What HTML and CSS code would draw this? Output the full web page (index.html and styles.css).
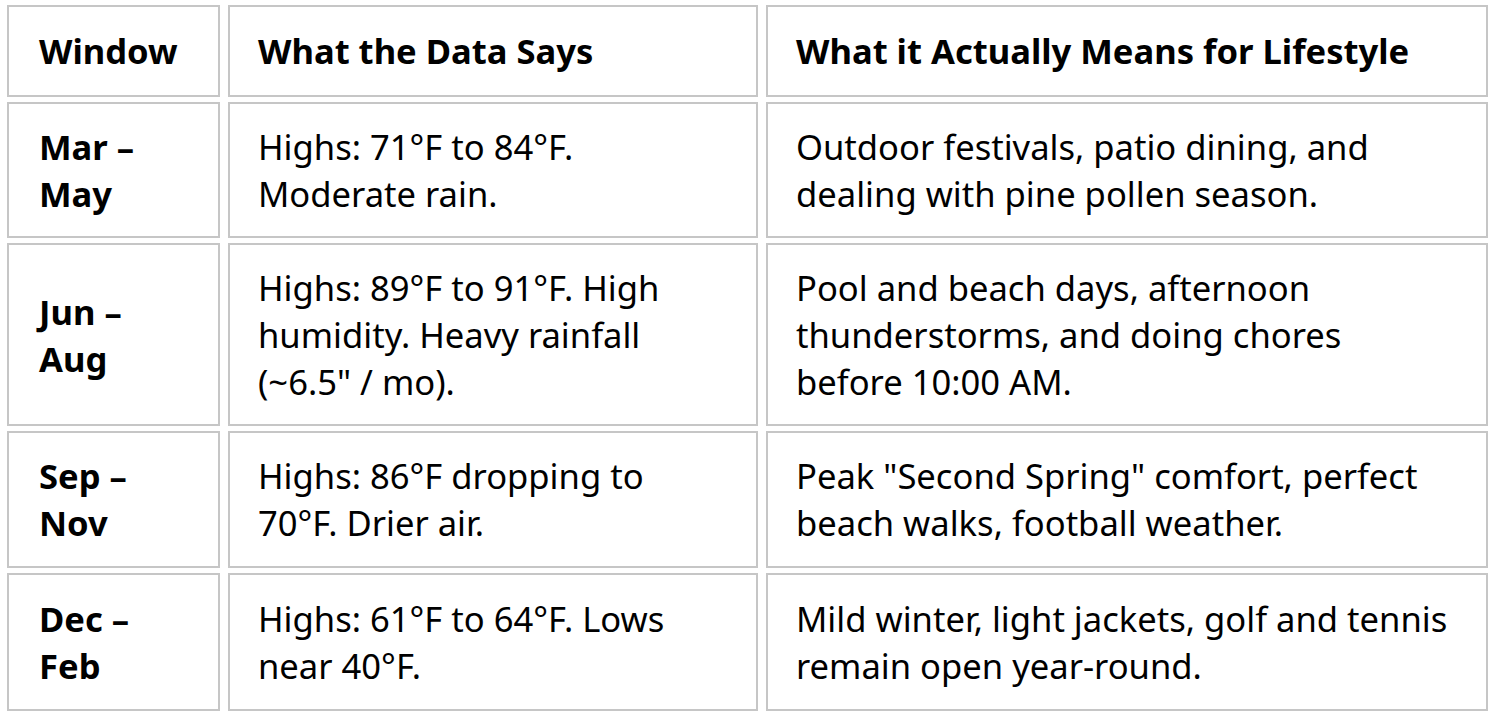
FILE: index.html
```html
<!DOCTYPE html>
<html lang="en">
<head>
<meta charset="utf-8">
<title>Seasonal Windows</title>
<link rel="stylesheet" href="styles.css">
</head>
<body>
<table class="climate">
  <colgroup>
    <col class="c-window">
    <col class="c-data">
    <col class="c-life">
  </colgroup>
  <thead>
    <tr>
      <th class="first">Window</th>
      <th>What the Data Says</th>
      <th>What it Actually Means for Lifestyle</th>
    </tr>
  </thead>
  <tbody>
    <tr>
      <th class="first">Mar –<br>May</th>
      <td>Highs: 71°F to 84°F.<br>Moderate rain.</td>
      <td>Outdoor festivals, patio dining, and<br>dealing with pine pollen season.</td>
    </tr>
    <tr>
      <th class="first">Jun –<br>Aug</th>
      <td>Highs: 89°F to 91°F. High<br>humidity. Heavy rainfall<br>(~6.5" / mo).</td>
      <td>Pool and beach days, afternoon<br>thunderstorms, and doing chores<br>before 10:00 AM.</td>
    </tr>
    <tr>
      <th class="first">Sep –<br>Nov</th>
      <td>Highs: 86°F dropping to<br>70°F. Drier air.</td>
      <td>Peak "Second Spring" comfort, perfect<br>beach walks, football weather.</td>
    </tr>
    <tr>
      <th class="first">Dec –<br>Feb</th>
      <td>Highs: 61°F to 64°F. Lows<br>near 40°F.</td>
      <td>Mild winter, light jackets, golf and tennis<br>remain open year-round.</td>
    </tr>
  </tbody>
</table>
</body>
</html>
```
FILE: styles.css
```css
html, body {
  margin: 0;
  padding: 0;
  background: #ffffff;
}

.climate {
  margin-left: -1px;
  width: 1497px;
  table-layout: fixed;
  border-collapse: separate;
  border-spacing: 8px 5px;
  font-family: "Noto Sans", "Open Sans", sans-serif;
  font-size: 34.6px;
  line-height: 47px;
  color: #000000;
}

.c-window { width: 213px; }
.c-data { width: 530px; }
.c-life { width: 722px; }

.climate th,
.climate td {
  box-sizing: border-box;
  border: 2px solid #c6c6c6;
  padding: 19px 28px 19px 28px;
  text-align: left;
  vertical-align: middle;
}

.climate th {
  font-weight: 700;
}

.climate td {
  font-weight: 400;
}

.climate thead th {
  padding-top: 20px;
  padding-bottom: 21px;
}

.climate .first {
  padding-left: 30px;
}

.climate tbody tr:nth-child(3) th,
.climate tbody tr:nth-child(3) td {
  padding-bottom: 20px;
}

.climate tbody tr:last-child th,
.climate tbody tr:last-child td {
  padding-top: 20px;
  padding-bottom: 20px;
}
```
